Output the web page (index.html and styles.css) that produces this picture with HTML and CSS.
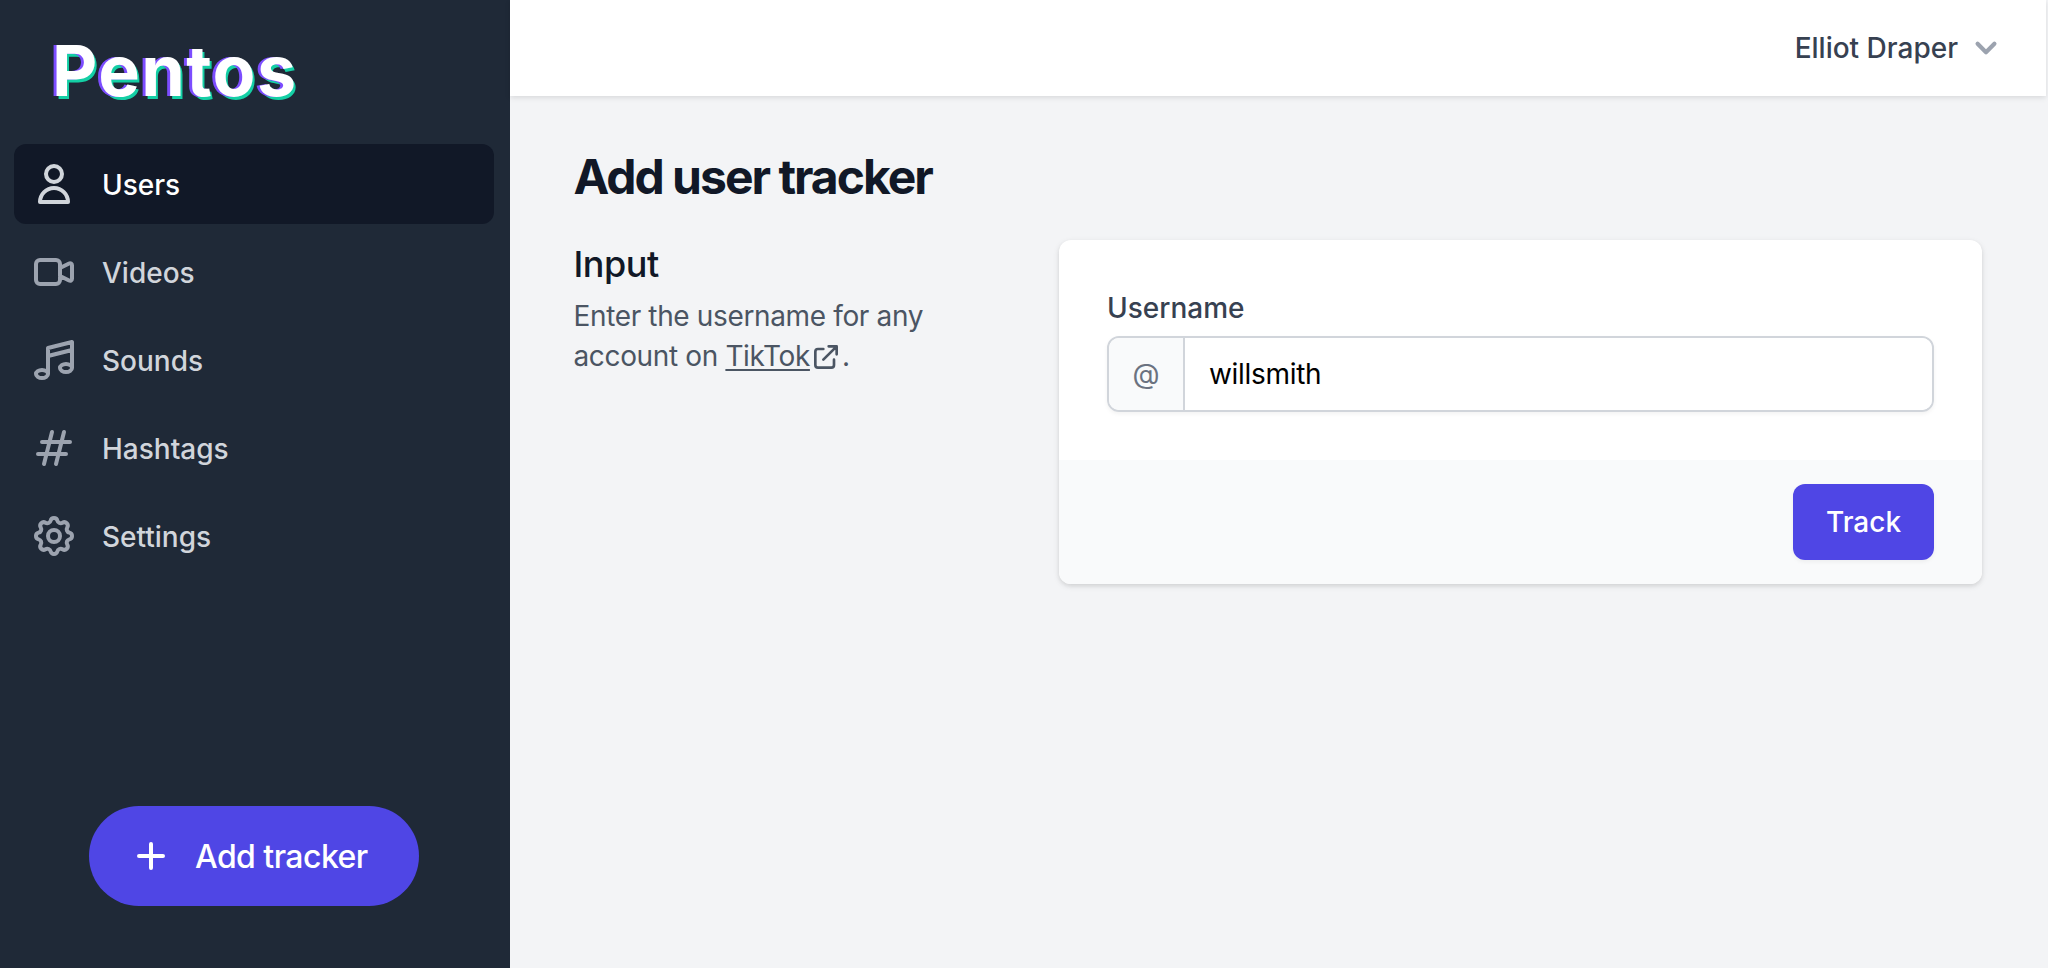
FILE: index.html
```html
<!DOCTYPE html>
<html lang="en">
<head>
<meta charset="utf-8">
<title>Pentos</title>
<link rel="stylesheet" href="styles.css">
</head>
<body>
<div class="app">
  <aside class="sidebar">
    <div class="logo"><span class="logo-text">Pentos</span></div>
    <nav class="nav">
      <a class="nav-item active">
        <svg class="nav-icon" viewBox="0 0 24 24"><path d="M16 7a4 4 0 11-8 0 4 4 0 018 0zM12 14a7 7 0 00-7 7h14a7 7 0 00-7-7z"/></svg>
        <span class="nav-label">Users</span>
      </a>
      <a class="nav-item">
        <svg class="nav-icon" viewBox="0 0 24 24"><path d="M15 10l4.553-2.276A1 1 0 0121 8.618v6.764a1 1 0 01-1.447.894L15 14M5 18h8a2 2 0 002-2V8a2 2 0 00-2-2H5a2 2 0 00-2 2v8a2 2 0 002 2z"/></svg>
        <span class="nav-label">Videos</span>
      </a>
      <a class="nav-item">
        <svg class="nav-icon" viewBox="0 0 24 24"><path d="M9 19V6l12-3v13M9 19c0 1.105-1.343 2-3 2s-3-.895-3-2 1.343-2 3-2 3 .895 3 2zm12-3c0 1.105-1.343 2-3 2s-3-.895-3-2 1.343-2 3-2 3 .895 3 2zM9 10l12-3"/></svg>
        <span class="nav-label">Sounds</span>
      </a>
      <a class="nav-item">
        <svg class="nav-icon" viewBox="0 0 24 24"><path d="M7 20l4-16m2 16l4-16M6 9h14M4 15h14"/></svg>
        <span class="nav-label">Hashtags</span>
      </a>
      <a class="nav-item">
        <svg class="nav-icon" viewBox="0 0 24 24"><path d="M10.325 4.317c.426-1.756 2.924-1.756 3.35 0a1.724 1.724 0 002.573 1.066c1.543-.94 3.31.826 2.37 2.37a1.724 1.724 0 001.065 2.572c1.756.426 1.756 2.924 0 3.35a1.724 1.724 0 00-1.066 2.573c.94 1.543-.826 3.31-2.37 2.37a1.724 1.724 0 00-2.572 1.065c-.426 1.756-2.924 1.756-3.35 0a1.724 1.724 0 00-2.573-1.066c-1.543.94-3.31-.826-2.37-2.37a1.724 1.724 0 00-1.065-2.572c-1.756-.426-1.756-2.924 0-3.35a1.724 1.724 0 001.066-2.573c-.94-1.543.826-3.31 2.37-2.37.996.608 2.296.07 2.572-1.065z"/><path d="M15 12a3 3 0 11-6 0 3 3 0 016 0z"/></svg>
        <span class="nav-label">Settings</span>
      </a>
    </nav>
    <button class="add-tracker" type="button">
      <svg class="add-icon" viewBox="0 0 24 24"><path d="M12 6v6m0 0v6m0-6h6m-6 0H6"/></svg>
      <span>Add tracker</span>
    </button>
  </aside>
  <div class="main">
    <header class="topbar">
      <span class="user-name">Elliot Draper</span>
      <svg class="chevron" viewBox="0 0 20 20"><path d="M5.293 7.293a1 1 0 011.414 0L10 10.586l3.293-3.293a1 1 0 111.414 1.414l-4 4a1 1 0 01-1.414 0l-4-4a1 1 0 010-1.414z"/></svg>
    </header>
    <main class="content">
      <h1 class="title">Add user tracker</h1>
      <section class="form-section">
        <div class="intro">
          <h2 class="intro-title">Input</h2>
          <p class="intro-text">Enter the username for any account on <a class="link">TikTok</a><svg class="ext-icon" viewBox="0 0 24 24"><path d="M10 6H6a2 2 0 00-2 2v10a2 2 0 002 2h10a2 2 0 002-2v-4M14 4h6m0 0v6m0-6L10 14"/></svg>.</p>
        </div>
        <form class="card">
          <div class="card-body">
            <label class="label" for="username">Username</label>
            <div class="input-group">
              <span class="addon">@</span>
              <input class="input" id="username" type="text" value="willsmith">
            </div>
          </div>
          <div class="card-footer">
            <button class="track" type="button">Track</button>
          </div>
        </form>
      </section>
    </main>
  </div>
</div>
</body>
</html>
```
FILE: styles.css
```css
* { box-sizing: border-box; }
html, body { margin: 0; height: 100%; }
body {
  font-family: Inter, "Liberation Sans", sans-serif;
  background: #f3f4f6;
  color: #111827;
  overflow: hidden;
}
.app { display: flex; height: 968px; }

.sidebar {
  width: 510px;
  flex: none;
  background: #1f2937;
  display: flex;
  flex-direction: column;
}
.logo {
  height: 144px;
  padding: 27px 0 0 52px;
  line-height: 88px;
}
.logo-text {
  font-size: 70px;
  font-weight: 700;
  letter-spacing: 1.4px;
  color: #fff;
  text-shadow: -3px 0 0 #7c4dff, 2px 3px 0 #14cfa5;
}
.nav {
  flex: 1;
  padding: 0 16px 0 14px;
  display: flex;
  flex-direction: column;
  gap: 8px;
}
.nav-item {
  height: 80px;
  border-radius: 12px;
  padding-left: 16px;
  display: flex;
  align-items: center;
  gap: 24px;
  font-size: 28px;
  font-weight: 500;
  color: #d1d5db;
}
.nav-label { padding-top: 1px; }
.nav-item.active { background: #111827; color: #fff; }
.nav-icon {
  width: 48px;
  height: 48px;
  flex: none;
  fill: none;
  stroke: #9ca3af;
  stroke-width: 2;
  stroke-linecap: round;
  stroke-linejoin: round;
}
.active .nav-icon { stroke: #d1d5db; }

.add-tracker {
  align-self: flex-start;
  margin: 0 0 62px 89px;
  width: 330px;
  height: 100px;
  border: 0;
  border-radius: 50px;
  background: #4f46e5;
  color: #fff;
  font: 500 32px Inter, "Liberation Sans", sans-serif;
  letter-spacing: -0.55px;
  padding: 0 0 0 38px;
  display: flex;
  align-items: center;
  gap: 20px;
}
.add-icon {
  width: 48px;
  height: 48px;
  flex: none;
  fill: none;
  stroke: #fff;
  stroke-width: 2;
  stroke-linecap: round;
  stroke-linejoin: round;
}

.main { flex: 1; min-width: 0; display: flex; flex-direction: column; padding-right: 2px; }
.topbar {
  height: 96px;
  flex: none;
  background: #fff;
  box-shadow: 0 2px 6px rgba(0,0,0,.08), 0 2px 4px rgba(0,0,0,.03);
  display: flex;
  align-items: center;
  justify-content: flex-end;
  padding-right: 40px;
  gap: 7px;
}
.user-name { font-size: 28px; font-weight: 500; color: #374151; }
.chevron { width: 42px; height: 42px; fill: #9ca3af; margin-right: -1px; }

.content { padding: 49px 64px 0 63.5px; }
.title {
  margin: 0;
  font-size: 48px;
  font-weight: 700;
  line-height: 64px;
  letter-spacing: -2px;
  color: #111827;
}
.form-section {
  margin-top: 31px;
  display: grid;
  grid-template-columns: 485.5px 1fr;
}
.intro-title {
  margin: 0;
  font-size: 36px;
  font-weight: 500;
  line-height: 48px;
  letter-spacing: -0.5px;
  color: #111827;
}
.intro-text {
  margin: 8px 0 0;
  width: 400px;
  font-size: 28px;
  line-height: 40px;
  letter-spacing: -0.36px;
  color: #4b5563;
}
.link { text-decoration: underline; text-decoration-thickness: 2px; text-underline-offset: 3px; }
.ext-icon {
  width: 32px;
  height: 32px;
  vertical-align: -7px;
  fill: none;
  stroke: #4b5563;
  stroke-width: 2;
  stroke-linecap: round;
  stroke-linejoin: round;
}

.card {
  background: #fff;
  border-radius: 12px;
  overflow: hidden;
  box-shadow: 0 2px 6px rgba(0,0,0,.1), 0 2px 4px rgba(0,0,0,.06);
}
.card-body { height: 220px; padding: 48px 48px 0 48px; }
.label {
  display: block;
  font-size: 28px;
  font-weight: 500;
  line-height: 40px;
  color: #374151;
}
.input-group {
  margin-top: 8px;
  height: 76px;
  display: flex;
  border: 2px solid #d1d5db;
  border-radius: 12px;
  overflow: hidden;
  box-shadow: 0 2px 4px rgba(0,0,0,.05);
}
.addon {
  width: 76px;
  flex: none;
  background: #f9fafb;
  border-right: 2px solid #d1d5db;
  color: #6b7280;
  font-size: 28px;
  display: flex;
  align-items: center;
  justify-content: center;
}
.input {
  flex: 1;
  min-width: 0;
  border: 0;
  outline: 0;
  background: #fff;
  padding: 0 24px;
  color: #000;
  letter-spacing: -0.3px;
  font: 400 28px Inter, "Liberation Sans", sans-serif;
}
.card-footer {
  height: 124px;
  background: #f9fafb;
  padding: 24px 48px;
  display: flex;
  justify-content: flex-end;
}
.track {
  width: 141px;
  height: 76px;
  border: 0;
  border-radius: 12px;
  background: #4f46e5;
  color: #fff;
  font: 500 28px Inter, "Liberation Sans", sans-serif;
  box-shadow: 0 2px 4px rgba(0,0,0,.05);
}
```
